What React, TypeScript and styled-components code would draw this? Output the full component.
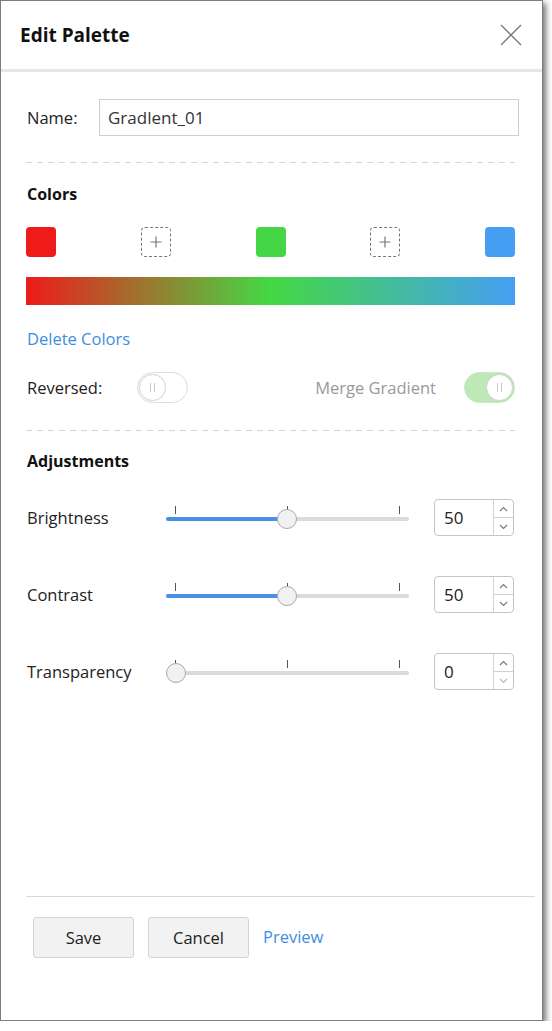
import React from "react";
import styled, { createGlobalStyle } from "styled-components";

const Global = createGlobalStyle`
  html, body { margin: 0; padding: 0; background: #fff; }
  body { font-family: "Open Sans", Lato, "Liberation Sans", sans-serif; color: #222; }
  * { box-sizing: border-box; }
`;

const Panel = styled.div`
  width: 543px;
  height: 1021px;
  border: 1px solid #7d7d7d;
  background: #fff;
  box-shadow: 3px 3px 6px rgba(0, 0, 0, 0.55);
  display: flex;
  flex-direction: column;
`;

const Header = styled.div`
  height: 71px;
  flex-shrink: 0;
  border-bottom: 3px solid #e6e6e6;
  display: flex;
  align-items: center;
  justify-content: space-between;
  padding: 0 20px 0 19px;
`;

const Title = styled.div`
  font-size: 19px;
  font-weight: 700;
  color: #111;
`;

const CloseBtn = styled.div`
  width: 22px;
  height: 22px;
  display: flex;
`;

const Content = styled.div`
  padding: 27px 27px 0 25px;
  display: flex;
  flex-direction: column;
`;

const NameRow = styled.div`
  display: flex;
  align-items: center;
  margin-right: -4px;
`;

const Label = styled.div<{ $w?: number; $muted?: boolean }>`
  font-size: 16.5px;
  color: ${(p) => (p.$muted ? "#9a9a9a" : "#222")};
  width: ${(p) => (p.$w ? `${p.$w}px` : "auto")};
  flex-shrink: 0;
  padding-left: 1px;
`;

const TextInput = styled.div`
  flex: 1;
  height: 37px;
  border: 1px solid #cfcfcf;
  display: flex;
  align-items: center;
  padding-left: 8px;
  font-size: 17px;
  color: #333;
`;

const Dashed = styled.div<{ $mt: number }>`
  height: 1px;
  margin-top: ${(p) => p.$mt}px;
  background: repeating-linear-gradient(to right, #d4d4d4 0 6px, transparent 6px 11px);
`;

const SectionTitle = styled.div<{ $mt: number }>`
  font-size: 16px;
  line-height: 18px;
  font-weight: 700;
  color: #111;
  margin-top: ${(p) => p.$mt}px;
  padding-left: 1px;
`;

const SwatchRow = styled.div`
  margin-top: 24px;
  display: flex;
  justify-content: space-between;
`;

const Swatch = styled.div<{ $c: string }>`
  width: 30px;
  height: 30px;
  border-radius: 4px;
  background: ${(p) => p.$c};
`;

const AddSwatch = styled.div`
  width: 30px;
  height: 30px;
  border-radius: 4px;
  border: 1px dashed #777;
  display: flex;
  align-items: center;
  justify-content: center;
`;

const GradientBar = styled.div`
  margin-top: 20px;
  height: 28px;
  background: linear-gradient(to right, #ee1b1b 0%, #44d844 50%, #449ff4 100%);
`;

const LinkText = styled.div<{ $mt?: number }>`
  color: #3d8ee3;
  font-size: 16.5px;
  line-height: 20px;
  margin-top: ${(p) => p.$mt ?? 0}px;
  padding-left: 1px;
`;

const ToggleRow = styled.div`
  margin-top: 23px;
  display: flex;
  align-items: center;
`;

const Toggle = styled.div<{ $on?: boolean }>`
  width: 51px;
  height: 31px;
  border-radius: 16px;
  border: 1px solid ${(p) => (p.$on ? "#c6e9c0" : "#dcdcdc")};
  background: ${(p) => (p.$on ? "#bfe8b7" : "#fff")};
  display: flex;
  align-items: center;
  justify-content: ${(p) => (p.$on ? "flex-end" : "flex-start")};
  padding: 0 1px;
  flex-shrink: 0;
`;

const Knob = styled.div`
  width: 27px;
  height: 27px;
  border-radius: 50%;
  background: #fff;
  border: 1px solid #d6d6d6;
  box-shadow: 0 0 1px rgba(0, 0, 0, 0.1);
  display: flex;
  align-items: center;
  justify-content: center;
  gap: 3px;
`;

const KnobLine = styled.span`
  width: 1px;
  height: 9px;
  background: #c9c9c9;
`;

const Spacer = styled.div`
  flex: 1;
`;

const MergeLabel = styled(Label)`
  margin-right: 28px;
`;

const AdjRow = styled.div<{ $mt: number }>`
  margin-top: ${(p) => p.$mt}px;
  display: flex;
  align-items: center;
  height: 37px;
`;

const SliderBox = styled.div`
  position: relative;
  width: 243px;
  height: 37px;
  flex-shrink: 0;
`;

const Track = styled.div`
  position: absolute;
  left: 0;
  right: 0;
  top: 18px;
  height: 4px;
  border-radius: 2px;
  background: #dadada;
`;

const Fill = styled.div`
  position: absolute;
  left: 0;
  top: 18px;
  height: 4px;
  border-radius: 2px;
  background: #4a8fe6;
`;

const Tick = styled.div`
  position: absolute;
  top: 7px;
  width: 1px;
  height: 8px;
  background: #555;
`;

const Thumb = styled.div`
  position: absolute;
  top: 10px;
  width: 20px;
  height: 20px;
  margin-left: -10px;
  border-radius: 50%;
  background: #f1f1f1;
  border: 1px solid #a9a9a9;
`;

const NumberBox = styled.div`
  margin-left: 25px;
  width: 80px;
  height: 37px;
  border: 1px solid #c4c4c4;
  border-radius: 4px;
  display: flex;
`;

const NumberValue = styled.div`
  flex: 1;
  display: flex;
  align-items: center;
  padding-left: 9px;
  font-size: 17px;
  color: #222;
`;

const Spinner = styled.div`
  width: 20px;
  border-left: 1px solid #d2d2d2;
  display: flex;
  flex-direction: column;
`;

const SpinBtn = styled.div<{ $top?: boolean }>`
  flex: 1;
  display: flex;
  align-items: center;
  justify-content: center;
  border-bottom: ${(p) => (p.$top ? "1px solid #d2d2d2" : "none")};
`;

const Footer = styled.div`
  margin-top: auto;
  padding: 0 7px 62px 25px;
`;

const Rule = styled.div`
  height: 1px;
  background: #d8d8d8;
`;

const ButtonRow = styled.div`
  margin-top: 20px;
  padding-left: 7px;
  display: flex;
  align-items: center;
`;

const Button = styled.div`
  width: 101px;
  height: 41px;
  border: 1px solid #d3d3d3;
  border-radius: 3px;
  background: #f2f2f2;
  display: flex;
  align-items: center;
  justify-content: center;
  font-size: 16.5px;
  color: #222;
  margin-right: 14px;
`;

const PreviewLink = styled.div`
  color: #3d8ee3;
  font-size: 16.5px;
  margin-top: -3px;
`;

const Chevron = ({ up, color }: { up?: boolean; color: string }) => (
  <svg width="9" height="6" viewBox="0 0 9 6">
    <path d={up ? "M1 5 L4.5 1.5 L8 5" : "M1 1 L4.5 4.5 L8 1"} fill="none" stroke={color} strokeWidth="1.1" />
  </svg>
);

const Plus = () => (
  <svg width="12" height="12" viewBox="0 0 12 12">
    <path d="M6 0.5 V11.5 M0.5 6 H11.5" stroke="#777" strokeWidth="1.2" />
  </svg>
);

type Adj = { label: string; value: number; mt: number };

const adjustments: Adj[] = [
  { label: "Brightness", value: 50, mt: 29 },
  { label: "Contrast", value: 50, mt: 40 },
  { label: "Transparency", value: 0, mt: 40 },
];

const TICKS = [9, 121, 233];

const AdjustRow = ({ a }: { a: Adj }) => {
  const pos = 10 + (a.value / 100) * 222;
  return (
    <AdjRow $mt={a.mt}>
      <Label $w={140}>{a.label}</Label>
      <SliderBox>
        {TICKS.map((t) => (
          <Tick key={t} style={{ left: t }} />
        ))}
        <Track />
        {a.value > 0 && <Fill style={{ width: pos }} />}
        <Thumb style={{ left: pos }} />
      </SliderBox>
      <NumberBox>
        <NumberValue>{a.value}</NumberValue>
        <Spinner>
          <SpinBtn $top>
            <Chevron up color="#777" />
          </SpinBtn>
          <SpinBtn>
            <Chevron color={a.value === 0 ? "#b5b5b5" : "#777"} />
          </SpinBtn>
        </Spinner>
      </NumberBox>
    </AdjRow>
  );
};

export default function App() {
  return (
    <>
      <Global />
      <Panel>
        <Header>
          <Title>Edit Palette</Title>
          <CloseBtn>
            <svg width="22" height="22" viewBox="0 0 22 22">
              <path d="M1 1 L21 21 M21 1 L1 21" stroke="#777" strokeWidth="1.3" />
            </svg>
          </CloseBtn>
        </Header>
        <Content>
          <NameRow>
            <Label $w={73}>Name:</Label>
            <TextInput>Gradlent_01</TextInput>
          </NameRow>
          <Dashed $mt={26} />
          <SectionTitle $mt={22}>Colors</SectionTitle>
          <SwatchRow>
            <Swatch $c="#ef1b1b" />
            <AddSwatch>
              <Plus />
            </AddSwatch>
            <Swatch $c="#45d645" />
            <AddSwatch>
              <Plus />
            </AddSwatch>
            <Swatch $c="#449ff3" />
          </SwatchRow>
          <GradientBar />
          <LinkText $mt={24}>Delete Colors</LinkText>
          <ToggleRow>
            <Label $w={111}>Reversed:</Label>
            <Toggle>
              <Knob>
                <KnobLine />
                <KnobLine />
              </Knob>
            </Toggle>
            <Spacer />
            <MergeLabel $muted>Merge Gradient</MergeLabel>
            <Toggle $on>
              <Knob>
                <KnobLine />
                <KnobLine />
              </Knob>
            </Toggle>
          </ToggleRow>
          <Dashed $mt={27} />
          <SectionTitle $mt={21}>Adjustments</SectionTitle>
          {adjustments.map((a) => (
            <AdjustRow key={a.label} a={a} />
          ))}
        </Content>
        <Footer>
          <Rule />
          <ButtonRow>
            <Button>Save</Button>
            <Button>Cancel</Button>
            <PreviewLink>Preview</PreviewLink>
          </ButtonRow>
        </Footer>
      </Panel>
    </>
  );
}
